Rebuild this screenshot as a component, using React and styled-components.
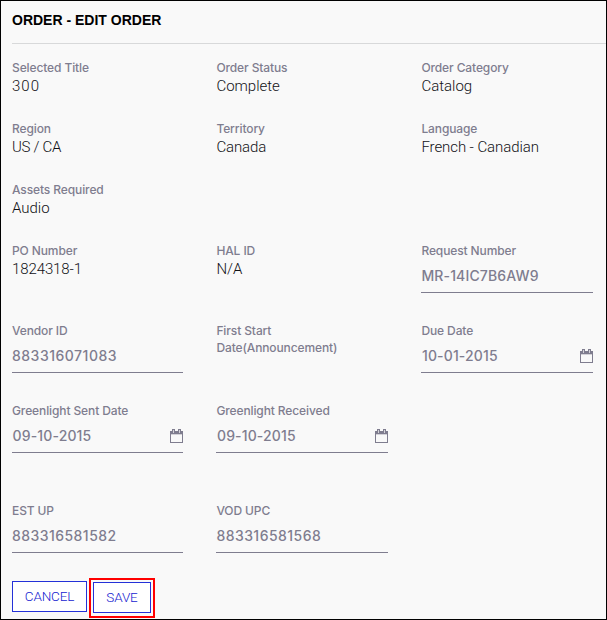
import React from 'react';
import styled, { createGlobalStyle } from 'styled-components';

const GlobalStyle = createGlobalStyle`
  *, *::before, *::after { box-sizing: border-box; }
  body { margin: 0; background: #f9f9f9; }
`;

const Panel = styled.main`
  width: 607px;
  height: 620px;
  padding: 0 0 0 11px;
  border: 1px solid #000;
  background: #f9f9f9;
  color: #111116;
  font-family: Roboto, "Liberation Sans", sans-serif;
  overflow: hidden;
`;

const Title = styled.h1`
  height: 43px;
  margin: 0 0 15px;
  border-bottom: 1px solid #d8d9da;
  color: #000;
  font: 700 14px/38px "Liberation Sans", Arial, sans-serif;
`;

const FieldRow = styled.section`
  display: grid;
  grid-template-columns: 204.4px 205px 171.4px;
  height: ${(p) => p.$height}px;
`;

const Field = styled.div`
  width: 171.4px;
`;

const Label = styled.label`
  display: block;
  height: ${(p) => (p.$tall ? 36 : 18)}px;
  color: #7f7d8f;
  font: 500 12px/17px Inter, sans-serif;
  letter-spacing: -0.11px;
`;

const Value = styled.div`
  font-size: 15px;
  font-weight: 300;
  line-height: 19px;
  letter-spacing: ${(p) => p.$track ?? 0}px;
`;

const InputBox = styled.div`
  display: flex;
  align-items: center;
  justify-content: space-between;
  height: 33px;
  border-bottom: 1px solid #7f7d8f;
  color: #7f7d8f;
  font: 500 14px/32px Inter, sans-serif;
  letter-spacing: ${(p) => p.$track ?? 0}px;
`;

const DateText = styled.span`
  padding-left: 0.6px;
  letter-spacing: 0.14px;
`;

const Actions = styled.footer`
  display: flex;
  align-items: flex-start;
  gap: 2px;
`;

const Button = styled.button`
  width: ${(p) => p.$width}px;
  height: 31px;
  padding: 0;
  border: 1px solid #2431d8;
  background: #fff;
  color: #1522d0;
  font: 300 13.5px/29px Roboto, sans-serif;
  letter-spacing: -0.15px;
`;

const CancelButton = styled(Button)`
  margin-top: 3px;
`;

const Highlight = styled.div`
  display: flex;
  height: 40px;
  padding: 2px;
  border: 2px solid #f00;
`;

const CalendarIcon = () => (
  <svg width="13" height="14" viewBox="0 0 13 14" shapeRendering="crispEdges" aria-hidden="true">
    <path fill="#7f7d8f" fillRule="evenodd" d="M0 2h13v12H0zM1 5v8h11V5z" />
    <path fill="#7f7d8f" d="M2 0h3v4H2zM8 0h3v4H8z" />
    <path fill="#d3d2d8" d="M3 1h1v3H3zM9 1h1v3H9zM1 5h11v1H1z" />
  </svg>
);

const rows = [
  { height: 61, fields: [
    { label: 'Selected Title', value: '300', track: 1 },
    { label: 'Order Status', value: 'Complete' },
    { label: 'Order Category', value: 'Catalog' },
  ] },
  { height: 61, fields: [
    { label: 'Region', value: 'US / CA', track: -0.3 },
    { label: 'Territory', value: 'Canada', track: -0.1 },
    { label: 'Language', value: 'French - Canadian', track: -0.08 },
  ] },
  { height: 61, fields: [{ label: 'Assets Required', value: 'Audio' }] },
  { height: 80, fields: [
    { label: 'PO Number', value: '1824318-1', track: -0.1 },
    { label: 'HAL ID', value: 'N/A' },
    { label: 'Request Number', input: 'MR-14IC7B6AW9', track: 0.15 },
  ] },
  { height: 80, fields: [
    { label: 'Vendor ID', input: '883316071083', track: 0.5 },
    { label: 'First Start Date(Announcement)', tall: true },
    { label: 'Due Date', date: '10-01-2015' },
  ] },
  { height: 100, fields: [
    { label: 'Greenlight Sent Date', date: '09-10-2015' },
    { label: 'Greenlight Received', date: '09-10-2015' },
  ] },
  { height: 76, fields: [
    { label: 'EST UP', input: '883316581582', track: 0.45 },
    { label: 'VOD UPC', input: '883316581568', track: 0.45 },
  ] },
];

export default function App() {
  return (
    <>
      <GlobalStyle />
      <Panel>
        <Title>ORDER - EDIT ORDER</Title>
        {rows.map((row) => (
          <FieldRow key={row.fields[0].label} $height={row.height}>
            {row.fields.map((field) => (
              <Field key={field.label}>
                <Label $tall={field.tall}>{field.label}</Label>
                {field.value && <Value $track={field.track}>{field.value}</Value>}
                {field.input && <InputBox $track={field.track}>{field.input}</InputBox>}
                {field.date && (
                  <InputBox>
                    <DateText>{field.date}</DateText>
                    <CalendarIcon />
                  </InputBox>
                )}
              </Field>
            ))}
          </FieldRow>
        ))}
        <Actions>
          <CancelButton type="button" $width={75}>CANCEL</CancelButton>
          <Highlight>
            <Button type="button" $width={58}>SAVE</Button>
          </Highlight>
        </Actions>
      </Panel>
    </>
  );
}
